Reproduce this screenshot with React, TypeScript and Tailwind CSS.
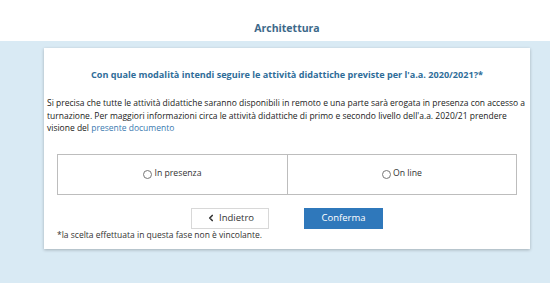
import React, { useState } from 'react';
import { ChevronLeft } from 'lucide-react';

export default function App() {
  const [choice, setChoice] = useState<string | null>(null);

  return (
    <div className="min-h-screen bg-[#d9eaf4] font-['Open_Sans',sans-serif] text-[#333]">
      <header className="h-[41px] bg-white flex items-end justify-center pb-[6px] pl-[24px]">
        <h1 className="text-[10.5px] font-bold leading-[14px] text-[#3d6889]">Architettura</h1>
      </header>

      <div className="pt-[7px] pl-[44px]">
        <div className="w-[486px] bg-white shadow-[0_1px_3px_rgba(0,0,0,0.25)] pt-[20px] pb-[8px]">
          <h2 className="text-center text-[9.1px] font-bold leading-[13px] text-[#2f6d99]">
            Con quale modalità intendi seguire le attività didattiche previste per l'a.a. 2020/2021?*
          </h2>

          <p className="mt-[16px] px-[3px] text-[8.5px] leading-[12.5px] text-[#222] whitespace-nowrap">
            Si precisa che tutte le attività didattiche saranno disponibili in remoto e una parte sarà erogata in presenza con accesso a
            <br />
            turnazione. Per maggiori informazioni circa le attività didattiche di primo e secondo livello dell'a.a. 2020/21 prendere
            <br />
            visione del <a href="#" className="text-[#3a7ab0]">presente documento</a>
          </p>

          <div className="mx-[13px] mt-[19px] grid grid-cols-2 h-[41px] border border-[#bdbdbd]">
            {[
              { id: 'presenza', label: 'In presenza' },
              { id: 'online', label: 'On line' },
            ].map((o, i) => (
              <label
                key={o.id}
                className={`flex items-center justify-center gap-[2px] cursor-pointer text-[8.7px] font-medium text-[#333] ${i === 1 ? 'border-l border-[#bdbdbd]' : ''}`}
              >
                <span className="w-[9px] h-[9px] rounded-full border border-[#777] flex items-center justify-center">
                  {choice === o.id && <span className="w-[4px] h-[4px] rounded-full bg-[#333]" />}
                </span>
                <input type="radio" name="mode" className="hidden" onChange={() => setChoice(o.id)} />
                {o.label}
              </label>
            ))}
          </div>

          <div className="mt-[13px] flex justify-center gap-[35px]">
            <button className="w-[78px] h-[21px] flex items-center justify-center gap-[3px] bg-white border border-[#d8d8d8] text-[9.5px] text-[#333]">
              <ChevronLeft size={10} strokeWidth={4} />
              Indietro
            </button>
            <button className="w-[79px] h-[21px] flex items-center justify-center bg-[#2f78bb] text-[9.5px] text-white">
              Conferma
            </button>
          </div>

          <p className="pl-[13px] text-[8.5px] leading-[12px] text-[#333]">
            *la scelta effettuata in questa fase non è vincolante.
          </p>
        </div>
      </div>
    </div>
  );
}
